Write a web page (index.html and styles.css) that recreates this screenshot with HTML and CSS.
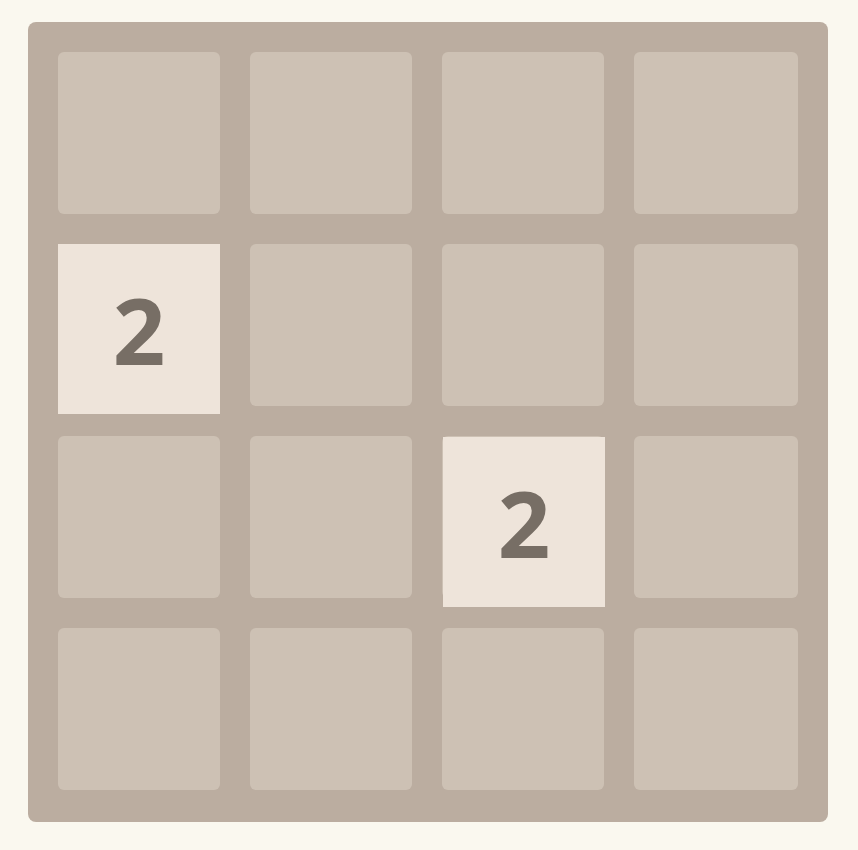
FILE: index.html
```html
<!DOCTYPE html>
<html lang="en">
<head>
    <meta charset="UTF-8">
    <meta name="viewport" content="width=device-width, initial-scale=1.0">
    <title>2048</title>
    <link rel="stylesheet" href="styles.css">
</head>
<body>
    <div class="board">
        <div class="cell"></div>
        <div class="cell"></div>
        <div class="cell"></div>
        <div class="cell"></div>

        <div class="cell"><div class="tile">2</div></div>
        <div class="cell"></div>
        <div class="cell"></div>
        <div class="cell"></div>

        <div class="cell"></div>
        <div class="cell"></div>
        <div class="cell"><div class="tile tile-shift">2</div></div>
        <div class="cell"></div>

        <div class="cell"></div>
        <div class="cell"></div>
        <div class="cell"></div>
        <div class="cell"></div>
    </div>
</body>
</html>
```

FILE: styles.css
```css
body {
    margin: 0;
    padding: 22px 28px;
    background-color: #faf8ef;
    font-family: "Open Sans", Arial, sans-serif;
}

.board {
    width: 800px;
    height: 800px;
    box-sizing: border-box;
    padding: 30px;
    background-color: #bbada0;
    border-radius: 8px;
    display: grid;
    grid-template-columns: 162px 162px 162px 1fr;
    grid-template-rows: repeat(4, 162px);
    gap: 30px;
}

.cell {
    position: relative;
    background-color: #cdc1b4;
    border-radius: 6px;
}

.tile {
    position: absolute;
    top: 0;
    left: 0;
    width: 162px;
    height: 170px;
    background-color: #eee4da;
    color: #776e65;
    font-size: 92px;
    font-weight: 700;
    display: flex;
    align-items: center;
    justify-content: center;
}

.tile-shift {
    top: 1px;
    left: 1px;
}
```
